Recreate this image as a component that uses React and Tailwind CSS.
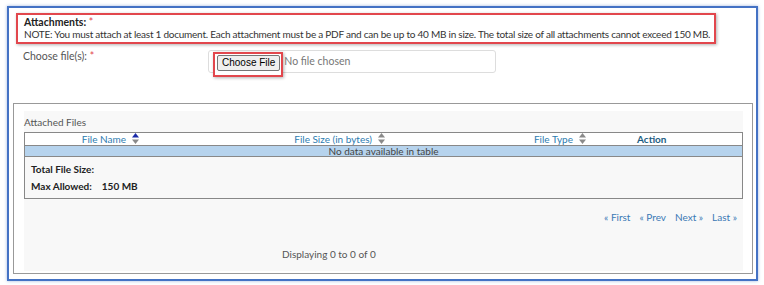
import React from 'react';

const font = { fontFamily: 'Lato, "Open Sans", sans-serif' };

const SortIcon = ({ active = false }) => (
  <svg width="7" height="11" viewBox="0 0 7 11" className="inline-block ml-[6px] align-[-1px]">
    <path d="M3.5 0 L7 4.5 L0 4.5 Z" fill={active ? '#1a2aa8' : '#8a8a8a'} />
    <path d="M0 6.5 L7 6.5 L3.5 11 Z" fill="#8a8a8a" />
  </svg>
);

export default function App() {
  return (
    <div className="w-[764px] h-[285px] bg-white pt-[6px] pl-[7px] text-[#333]" style={font}>
      <div className="w-[751px] h-[275px] border-2 border-[#4472c4] shadow-[0_0_3px_rgba(68,114,196,0.5)] relative">
        {/* Attachments note */}
        <div className="ml-[7px] mt-[5px] w-[700px] h-[31px] border-2 border-[#e2474d] shadow-[1px_1px_3px_rgba(0,0,0,0.3)] pl-[6px] pt-[1px] text-[10.5px] leading-[12px]">
          <div>
            <span className="font-bold text-[#222]">Attachments:</span>{' '}
            <span className="text-[#e2474d]">*</span>
          </div>
          <div className="text-[#333] whitespace-nowrap text-[10px] tracking-[-0.24px]">
            NOTE: You must attach at least 1 document. Each attachment must be a PDF and can be up to 40 MB in size. The total size of all attachments cannot exceed 150 MB.
          </div>
        </div>

        {/* Choose file row */}
        <div className="flex mt-[6px] ml-[14px]">
          <div className="w-[185px] text-[10.5px] leading-[12px] text-[#555]">
            Choose file(s): <span className="text-[#e2474d]">*</span>
          </div>
          <div className="w-[288px] h-[23px] border border-[#ddd] rounded-[3px] flex items-start pl-[4px]">
            <div className="mt-[1px] border-2 border-[#e2474d] pl-[2px] pr-[1px] pt-[1px] pb-[4px] shadow-[1px_1px_3px_rgba(0,0,0,0.3)] bg-white">
              <div className="h-[16px] px-[4px] bg-[#efefef] border border-[#767676] rounded-[2px] text-[10px] leading-[14px] text-black" style={{ fontFamily: '"Liberation Sans", Arial, sans-serif' }}>
                Choose File
              </div>
            </div>
            <span className="ml-[1px] mt-[4px] text-[10.5px] leading-[12px] text-[#777]">No file chosen</span>
          </div>
        </div>

        {/* Attached files panel */}
        <div className="absolute left-[4px] top-[95px] w-[740px] h-[171px] border-[1.5px] border-[#999] bg-white pl-[10px] pr-[9px] pt-[7px] pb-[2px]">
          <div className="h-full bg-[#f8f8f8] flex flex-col">
            <div className="pt-[5px] text-[10px] leading-[12px] text-[#555]">Attached Files</div>
            <div className="mt-[4px] border border-[#888] bg-[#f8f8f8] h-[67px]">
              <div className="grid grid-cols-[114px_246px_201px_1fr] h-[12px] text-[10px] leading-[12px] bg-white">
                <div className="text-right text-[#2d7cb0]">File Name<SortIcon active /></div>
                <div className="text-right text-[#2d7cb0]">File Size (in bytes)<SortIcon /></div>
                <div className="text-right text-[#2d7cb0]">File Type<SortIcon /></div>
                <div className="pl-[51px] font-bold text-[#1d5e82]">Action</div>
              </div>
              <div className="h-[12px] bg-[#b6d3ed] border-y border-[#888] text-center text-[10px] leading-[10px] text-[#444]">
                No data available in table
              </div>
              <div className="pl-[6px] pt-[6px] text-[10px] leading-[12px] font-bold text-[#222]">
                <div>Total File Size:</div>
                <div className="mt-[5px]">
                  Max Allowed:<span className="ml-[10px]">150 MB</span>
                </div>
              </div>
            </div>
            <div className="flex justify-end gap-[9px] pr-[6px] mt-[12px] text-[10px] leading-[12px] text-[#3a78b5]">
              <span>« First</span>
              <span>« Prev</span>
              <span>Next »</span>
              <span>Last »</span>
            </div>
            <div className="mt-[25px] ml-[258px] text-[10px] leading-[12px] text-[#555]">Displaying 0 to 0 of 0</div>
          </div>
        </div>
      </div>
    </div>
  );
}
